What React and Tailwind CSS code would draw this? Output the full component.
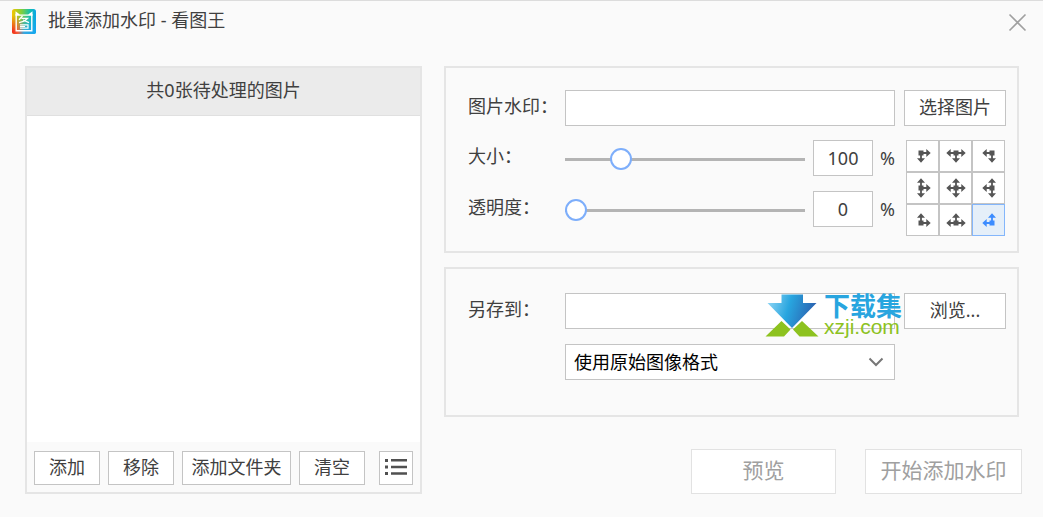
import React, { useState } from "react";
import { clsx } from "clsx";

const BUTTON = "border border-[#c4c4c4] bg-white pb-[2px] text-center text-[18px] leading-6 text-[#404040]";
const FIELD = "h-9 border border-[#c4c4c4] bg-white text-[18px] leading-6 text-[#404040] outline-none";
const LABEL = "w-[97px] shrink-0 pb-1 text-[18px] leading-6 text-[#404040]";
const PANEL = "border-2 border-[#e5e5e5]";
const RANGE =
  "h-6 w-full min-w-0 appearance-none bg-transparent pt-[2px] [&::-webkit-slider-runnable-track]:h-[3px] [&::-webkit-slider-runnable-track]:bg-[#b4b4b4] [&::-webkit-slider-thumb]:-mt-[10px] [&::-webkit-slider-thumb]:size-[22px] [&::-webkit-slider-thumb]:appearance-none [&::-webkit-slider-thumb]:rounded-full [&::-webkit-slider-thumb]:border-2 [&::-webkit-slider-thumb]:border-[#7daefb] [&::-webkit-slider-thumb]:bg-white";
const ACTION = "h-[45px] border border-[#e2e2e2] bg-white pb-1 text-[21px] leading-7 text-[#a0a0a0]";

const ANCHORS = [
  { name: "左上", x: -2, y: -3, dirs: [0, 90] },
  { name: "上", x: 0, y: -3, dirs: [0, 90, 180] },
  { name: "右上", x: 3, y: -3, dirs: [90, 180] },
  { name: "左", x: -2, y: 0, dirs: [0, 90, 270] },
  { name: "中", x: 0, y: 0, dirs: [0, 90, 180, 270] },
  { name: "右", x: 3, y: 0, dirs: [90, 180, 270] },
  { name: "左下", x: -2, y: 3, dirs: [0, 270] },
  { name: "下", x: 0, y: 3, dirs: [0, 180, 270] },
  { name: "右下", x: 3, y: 3, dirs: [180, 270] },
];

function AnchorIcon({ x, y, dirs }) {
  return (
    <svg viewBox="-13 -13 26 26" className="size-[26px]" fill="currentColor" aria-hidden="true">
      <g transform={`translate(${x} ${y})`}>
        <rect x="-2.5" y="-2.5" width="5" height="5" />
        {dirs.map((d) => (
          <path key={d} transform={`rotate(${d})`} d="M0-.9H5.3V-4L9.7 0 5.3 4V.9H0z" />
        ))}
      </g>
    </svg>
  );
}

function Logo() {
  return (
    <svg viewBox="0 0 24 25" className="mt-[1px] h-[25px] w-6" aria-hidden="true">
      <defs>
        <linearGradient id="hue" x1="0" y1="0" x2="1" y2="0">
          <stop offset="0" stopColor="#f7c600" />
          <stop offset=".4" stopColor="#7fd03c" />
          <stop offset=".75" stopColor="#12bfae" />
          <stop offset="1" stopColor="#0aa5e8" />
        </linearGradient>
        <linearGradient id="warm" x1="0" y1="0" x2="1" y2="0">
          <stop offset="0" stopColor="#f3261c" />
          <stop offset=".25" stopColor="#f2603c" />
          <stop offset=".5" stopColor="#35a7e0" />
          <stop offset="1" stopColor="#12a8f0" />
        </linearGradient>
        <linearGradient id="fade" x1="0" y1="0" x2="0" y2="1">
          <stop offset=".25" stopColor="#000" />
          <stop offset=".9" stopColor="#fff" />
        </linearGradient>
        <mask id="lower">
          <rect width="24" height="25" fill="url(#fade)" />
        </mask>
      </defs>
      <rect width="24" height="25" rx="2.5" fill="url(#hue)" />
      <rect width="24" height="25" rx="2.5" fill="url(#warm)" mask="url(#lower)" />
      <path d="M3.500 2.200 7.800 5.400H16.200L20.500 2.200V6.800H3.500z" fill="#fff" />
      <g fill="none" stroke="#fff" strokeWidth="1.4">
        <path d="M4.200 5V21.800H19.800V5" />
        <path d="M10.500 7 7 10.800M9.500 9.300H15.500L12.500 12 7 13.600M11 11 17 13.600" strokeWidth="1.300" />
        <path d="M8 15.800H16V19.200H8M8 17.500H13" strokeWidth="1.200" />
      </g>
    </svg>
  );
}

function SiteMark() {
  return (
    <div className="pointer-events-none absolute -right-[7px] top-0 flex items-start gap-[5px]">
      <svg viewBox="0 0 54 43" className="mt-[1px] h-[43px] w-[54px]" aria-hidden="true">
        <defs>
          <linearGradient id="arrow" x1="0" y1=".2" x2="1" y2=".4">
            <stop offset="0" stopColor="#8fd6f5" />
            <stop offset=".45" stopColor="#28a5df" />
            <stop offset="1" stopColor="#2b5fae" />
          </linearGradient>
        </defs>
        <path d="M16.500 .5H38V9H51.500L27 34 2.500 9H16.500z" fill="url(#arrow)" />
        <path d="M16.500 27 25.500 35.500 19 42.500H.5zM37 27 28 35.500 34.500 42.500H53.500z" fill="#8dc21f" />
      </svg>
      <div>
        <div className="text-[26px] font-bold leading-[26px] text-[#28a5df]">下载集</div>
        <div className="font-['Liberation_Sans',sans-serif] text-[21px] leading-4 text-[#8dc21f]">xzji.com</div>
      </div>
    </div>
  );
}

function SliderRow({ id, label, value, min, max, onChange }) {
  return (
    <div className="flex items-center">
      <label htmlFor={id} className={LABEL}>{label}</label>
      <input id={id} type="range" min={min} max={max} value={value} onChange={(e) => onChange(Number(e.target.value))} className={RANGE} />
      <input
        type="text"
        aria-label={label}
        value={value}
        onChange={(e) => onChange(Number(e.target.value) || 0)}
        className={clsx(FIELD, "ml-2 w-[60px] shrink-0 text-center")}
      />
      <span className="w-[22px] shrink-0 pl-[7px] text-[18px] leading-6 text-[#404040]">%</span>
    </div>
  );
}

export default function App() {
  const [size, setSize] = useState(100);
  const [opacity, setOpacity] = useState(0);
  const [anchor, setAnchor] = useState(8);

  return (
    <div className="flex min-h-screen flex-col border-t border-[#dcdcdc] bg-[#fafafa] font-['Noto_Sans','Noto_Sans_CJK_SC',sans-serif] text-[#404040]">
      <header className="flex h-[65px] items-start justify-between pl-3 pr-4 pt-[7px]">
        <div className="flex gap-3">
          <Logo />
          <h1 className="text-[18px] leading-6">批量添加水印 - 看图王</h1>
        </div>
        <button type="button" aria-label="关闭" className="mt-1 text-[#a0a0a0]">
          <svg viewBox="0 0 20 20" className="size-5" fill="none" stroke="currentColor" strokeWidth="1.6" aria-hidden="true">
            <path d="M2.500 2.500 18.500 18.500M18.500 2.500 2.500 18.500" />
          </svg>
        </button>
      </header>

      <div className="flex flex-1 gap-[22px] pb-6 pl-[25px] pr-[21px]">
        <section className={clsx(PANEL, "flex w-[397px] shrink-0 flex-col")}>
          <h2 className="border-b border-[#e0e0e0] bg-[#ebebeb] pb-[13px] pt-[10px] text-center text-[18px] leading-6">
            共0张待处理的图片
          </h2>
          <div className="flex-1 bg-white" />
          <div className="flex items-center gap-2 p-[7px] pt-[9px]">
            <button type="button" className={clsx(BUTTON, "h-[34px] w-[66px]")}>添加</button>
            <button type="button" className={clsx(BUTTON, "h-[34px] w-[66px]")}>移除</button>
            <button type="button" className={clsx(BUTTON, "h-[34px] w-[109px]")}>添加文件夹</button>
            <button type="button" className={clsx(BUTTON, "h-[34px] w-[66px]")}>清空</button>
            <button type="button" aria-label="列表" className={clsx(BUTTON, "ml-auto flex h-[34px] w-[34px] items-center justify-center")}>
              <svg viewBox="0 0 22 16" className="h-4 w-[22px]" fill="#505050" aria-hidden="true">
                <path d="M0 0H3V3H0zM6 0H22V2.500H6zM0 6.500H3V9.500H0zM6 6.800H22V9.300H6zM0 13H3V16H0zM6 13.300H22V15.800H6z" />
              </svg>
            </button>
          </div>
        </section>

        <div className="flex min-w-0 flex-1 flex-col">
          <div className="flex flex-col gap-[14px] pr-[3px]">
            <section className={clsx(PANEL, "flex h-[187px] flex-col gap-[14px] pl-[22px] pr-[11px] pt-[22px]")}>
              <div className="flex items-center">
                <label htmlFor="picture" className={LABEL}>图片水印：</label>
                <input id="picture" type="text" className={clsx(FIELD, "min-w-0 flex-1 px-2")} />
                <button type="button" className={clsx(BUTTON, "ml-[9px] h-9 w-[102px]")}>选择图片</button>
              </div>
              <div className="flex">
                <div className="flex min-w-0 flex-1 flex-col gap-[15px]">
                  <SliderRow id="size" label="大小：" value={size} min={1} max={480} onChange={setSize} />
                  <SliderRow id="opacity" label="透明度：" value={opacity} min={0} max={100} onChange={setOpacity} />
                </div>
                <div className="ml-[11px] mr-[1px] grid grid-cols-3">
                  {ANCHORS.map((a, i) => (
                    <button
                      key={a.name}
                      type="button"
                      aria-label={a.name}
                      aria-pressed={i === anchor}
                      onClick={() => setAnchor(i)}
                      className={clsx(
                        "flex h-8 w-[33px] items-center justify-center border",
                        i === anchor ? "border-[#84b6fb] bg-[#e5eff9] text-[#3c8cff]" : "border-[#c4c4c4] bg-white text-[#555555]"
                      )}
                    >
                      <AnchorIcon {...a} />
                    </button>
                  ))}
                </div>
              </div>
            </section>

            <section className={clsx(PANEL, "flex h-[150px] flex-col gap-[15px] pl-[22px] pr-[11px] pt-6")}>
              <div className="flex items-center">
                <label htmlFor="target" className={LABEL}>另存到：</label>
                <div className="relative flex min-w-0 flex-1">
                  <input id="target" type="text" className={clsx(FIELD, "w-full px-2")} />
                  <SiteMark />
                </div>
                <button type="button" className={clsx(BUTTON, "ml-[9px] h-9 w-[102px]")}>浏览...</button>
              </div>
              <div className="relative ml-[97px] mr-[111px]">
                <select aria-label="格式" className={clsx(FIELD, "w-full appearance-none px-2 text-black")}>
                  <option>使用原始图像格式</option>
                </select>
                <svg viewBox="0 0 16 10" className="pointer-events-none absolute right-[11px] top-[13px] h-[10px] w-4" fill="none" stroke="#777" strokeWidth="2" aria-hidden="true">
                  <path d="M1.500 1.500 8 8 14.500 1.500" />
                </svg>
              </div>
            </section>
          </div>

          <div className="mt-8 flex justify-end gap-[29px]">
            <button type="button" disabled className={clsx(ACTION, "w-[145px]")}>预览</button>
            <button type="button" disabled className={clsx(ACTION, "w-[157px]")}>开始添加水印</button>
          </div>
        </div>
      </div>
    </div>
  );
}
